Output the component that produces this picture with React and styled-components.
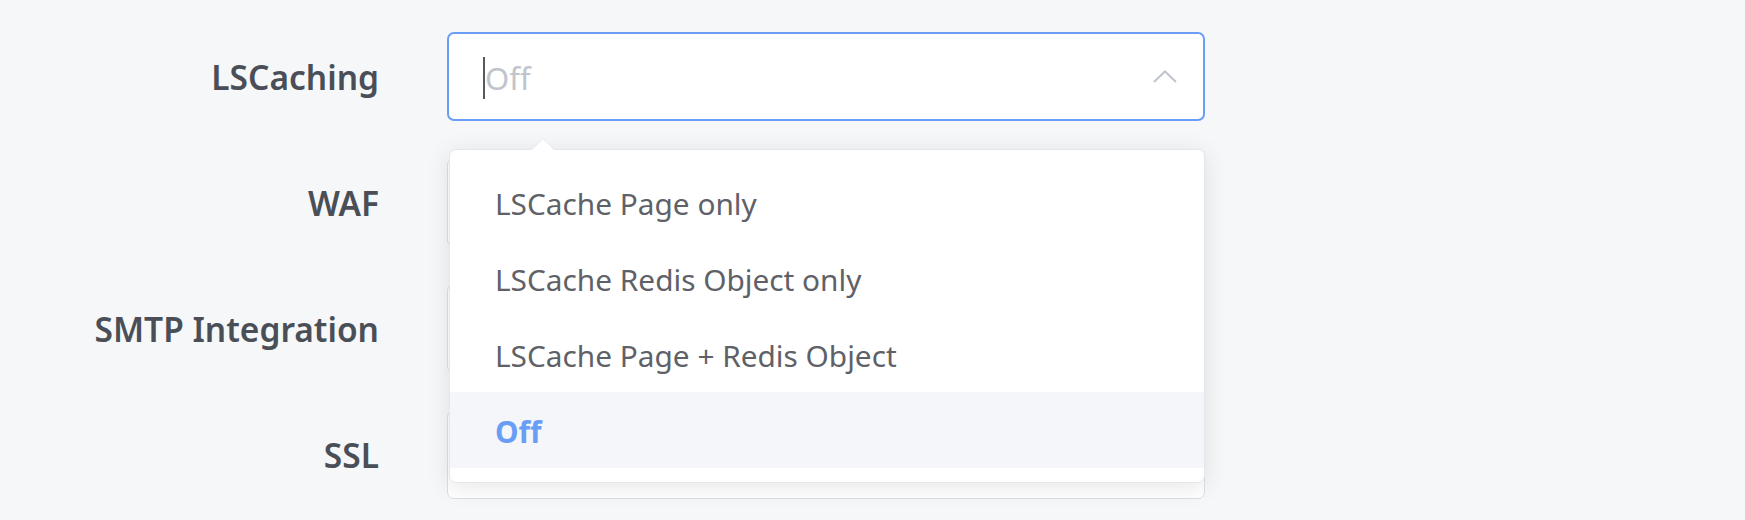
import React, { useState } from 'react';
import styled, { createGlobalStyle } from 'styled-components';

const GlobalStyle = createGlobalStyle`
  body {
    margin: 0;
    background: #f6f7f9;
    font-family: 'Noto Sans', 'Open Sans', sans-serif;
  }
`;

const rows = [
  { label: 'LSCaching', open: true },
  { label: 'WAF' },
  { label: 'SMTP Integration' },
  { label: 'SSL' },
];

const options = [
  'LSCache Page only',
  'LSCache Redis Object only',
  'LSCache Page + Redis Object',
  'Off',
];

const App = () => {
  const [value] = useState('Off');

  return (
    <Page>
      <GlobalStyle />
      <Form>
        {rows.map(({ label, open }) => (
          <React.Fragment key={label}>
            <Label>{label}</Label>
            <SelectWrap>
              <SelectBox $focused={open}>
                {open && <Caret />}
                {open && <Placeholder>{value}</Placeholder>}
                {open && (
                  <Chevron viewBox='0 0 24 13'>
                    <polyline points='1,12 12,1.5 23,12' />
                  </Chevron>
                )}
              </SelectBox>
              {open && (
                <Dropdown>
                  <Arrow />
                  <OptionList>
                    {options.map((opt) => (
                      <Option key={opt} $selected={opt === value}>
                        {opt}
                      </Option>
                    ))}
                  </OptionList>
                </Dropdown>
              )}
            </SelectWrap>
          </React.Fragment>
        ))}
      </Form>
    </Page>
  );
};

const Page = styled.div`
  width: 1745px;
  height: 520px;
  overflow: hidden;
`;

const Form = styled.div`
  display: grid;
  grid-template-columns: 379px 758px;
  grid-auto-rows: 89px;
  column-gap: 68px;
  row-gap: 37px;
  padding-top: 32px;
`;

const Label = styled.div`
  display: flex;
  align-items: center;
  justify-content: flex-end;
  font-size: 33.5px;
  font-weight: 600;
  color: #4a4f57;
  white-space: nowrap;
`;

const SelectWrap = styled.div`
  position: relative;
`;

const SelectBox = styled.div`
  box-sizing: border-box;
  height: 100%;
  display: flex;
  align-items: center;
  padding: 0 26px 0 34px;
  background: #fff;
  border: ${({ $focused }) => ($focused ? '2px solid #6a9ef6' : '1px solid #dcdfe6')};
  border-radius: 7px;
`;

const Caret = styled.span`
  width: 2px;
  height: 42px;
  margin-top: 2px;
  background: #555a62;
`;

const Placeholder = styled.span`
  flex: 1;
  font-size: 31px;
  color: #c0c4cc;
  line-height: 1;
  padding-top: 3px;
`;

const Chevron = styled.svg`
  width: 24px;
  height: 13px;
  fill: none;
  stroke: #c0c4cc;
  stroke-width: 2;
`;

const Dropdown = styled.div`
  position: absolute;
  top: 117px;
  left: 2px;
  right: 0;
  z-index: 2;
  background: #fff;
  border: 1px solid #e4e7ed;
  border-radius: 7px;
  box-shadow: 0 4px 24px rgba(0, 0, 0, 0.1);
`;

const Arrow = styled.div`
  position: absolute;
  top: -12px;
  left: 81px;
  width: 0;
  height: 0;
  border-left: 12px solid transparent;
  border-right: 12px solid transparent;
  border-bottom: 12px solid #e4e7ed;

  &::after {
    content: '';
    position: absolute;
    top: 1px;
    left: -11px;
    border-left: 11px solid transparent;
    border-right: 11px solid transparent;
    border-bottom: 11px solid #fff;
  }
`;

const OptionList = styled.ul`
  list-style: none;
  margin: 0;
  padding: 14px 0;
`;

const Option = styled.li`
  height: 76px;
  display: flex;
  align-items: center;
  padding: 2px 45px 0;
  box-sizing: border-box;
  font-size: 29.8px;
  color: ${({ $selected }) => ($selected ? '#6a9ef6' : '#5f6168')};
  font-weight: ${({ $selected }) => ($selected ? 700 : 400)};
  background: ${({ $selected }) => ($selected ? '#f5f6f9' : 'transparent')};
`;

export default App;
